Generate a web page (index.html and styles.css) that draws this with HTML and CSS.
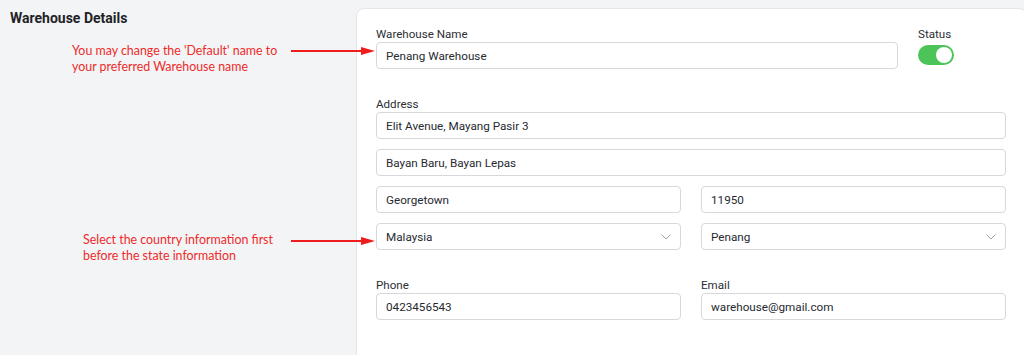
FILE: index.html
```html
<!DOCTYPE html>
<html lang="en">
<head>
<meta charset="UTF-8" />
<meta name="viewport" content="width=device-width, initial-scale=1" />
<title>Warehouse Details</title>
<link rel="stylesheet" href="styles.css">
</head>
<body>

<div class="page">
  <div class="side">
    <h2>Warehouse Details</h2>

    <div class="note note-name">
      <p>You may change the 'Default' name to<br>your preferred Warehouse name</p>
      <svg class="arrow" width="84" height="10" viewBox="0 0 84 10">
        <line x1="0" y1="5" x2="74" y2="5" stroke="#ee1c1c" stroke-width="2" />
        <polygon points="70,1 84,5 70,9" fill="#ee1c1c" />
      </svg>
    </div>

    <div class="note note-country">
      <p>Select the country information first<br>before the state information</p>
      <svg class="arrow" width="84" height="10" viewBox="0 0 84 10">
        <line x1="0" y1="5" x2="74" y2="5" stroke="#ee1c1c" stroke-width="2" />
        <polygon points="70,1 84,5 70,9" fill="#ee1c1c" />
      </svg>
    </div>
  </div>

  <div class="card">
    <div class="row-top">
      <div class="field">
        <label>Warehouse Name</label>
        <div class="input">Penang Warehouse</div>
      </div>
      <div class="field">
        <label>Status</label>
        <div class="toggle"><span class="knob"></span></div>
      </div>
    </div>

    <div class="group">
      <label>Address</label>
      <div class="stack">
        <div class="input">Elit Avenue, Mayang Pasir 3</div>
        <div class="input">Bayan Baru, Bayan Lepas</div>
        <div class="cols">
          <div class="input">Georgetown</div>
          <div class="input">11950</div>
        </div>
        <div class="cols">
          <div class="input select">Malaysia
            <svg width="10" height="6" viewBox="0 0 10 6"><polyline points="0.5,0.5 5,5 9.5,0.5" fill="none" stroke="#a0a4aa" stroke-width="1" /></svg>
          </div>
          <div class="input select">Penang
            <svg width="10" height="6" viewBox="0 0 10 6"><polyline points="0.5,0.5 5,5 9.5,0.5" fill="none" stroke="#a0a4aa" stroke-width="1" /></svg>
          </div>
        </div>
      </div>
    </div>

    <div class="cols group">
      <div class="field">
        <label>Phone</label>
        <div class="input">0423456543</div>
      </div>
      <div class="field">
        <label>Email</label>
        <div class="input">warehouse@gmail.com</div>
      </div>
    </div>
  </div>
</div>

</body>
</html>
```

FILE: styles.css
```css
html, body {
  margin: 0;
  padding: 0;
  overflow: hidden;
}

body {
  background: #f3f4f6;
  font-family: Roboto, "Liberation Sans", sans-serif;
  color: #222;
}

.page {
  display: flex;
  align-items: flex-start;
  width: 100vw;
  height: 100vh;
  overflow: hidden;
}

/* Left column with the title and the red notes */
.side {
  flex: none;
  width: 346px;
  padding: 8px 0 0 10px;
  position: relative;
  z-index: 2;
}

.side h2 {
  margin: 0;
  font-size: 14px;
  line-height: 20px;
  font-weight: 700;
  color: #1f2226;
}

.note {
  display: flex;
  align-items: flex-start;
}
.note p {
  margin: 0;
  font-family: Lato, "Open Sans", sans-serif;
  font-size: 12.4px;
  line-height: 16px;
  color: #ee2a2a;
}
.note .arrow {
  margin-left: auto;
  margin-right: -19px;
  flex: none;
}

.note-name {
  margin-top: 15px;
  padding-left: 62px;
}
.note-name .arrow {
  margin-top: 3px;
}

.note-country {
  margin-top: 157px;
  padding-left: 73px;
}
.note-country .arrow {
  margin-top: 4px;
}

/* Form card */
.card {
  flex: none;
  margin-top: 8px;
  width: 630px;
  padding: 17px 20px 50px 19px;
  background: #fff;
  border: 1px solid #e4e6ea;
  border-radius: 8px;
}

label {
  display: block;
  font-size: 11.6px;
  line-height: 16px;
  color: #2b2e33;
}

.row-top {
  display: grid;
  grid-template-columns: 1fr 88px;
  gap: 20px;
}

.group {
  margin-top: 27px;
}

.stack {
  display: flex;
  flex-direction: column;
  gap: 10px;
}

.cols {
  display: grid;
  grid-template-columns: 1fr 1fr;
  gap: 20px;
}

.input {
  box-sizing: border-box;
  height: 27px;
  display: flex;
  align-items: center;
  padding: 0 9px;
  border: 1px solid #d6d8dc;
  border-radius: 4px;
  font-size: 11.7px;
  color: #262a30;
  background: #fff;
}

.select {
  justify-content: space-between;
}

.toggle {
  box-sizing: border-box;
  margin-top: 3px;
  width: 36px;
  height: 20px;
  border-radius: 10px;
  background: #4cc45a;
  padding: 2px;
  display: flex;
  justify-content: flex-end;
}
.knob {
  width: 16px;
  height: 16px;
  border-radius: 50%;
  background: #fff;
}
```
